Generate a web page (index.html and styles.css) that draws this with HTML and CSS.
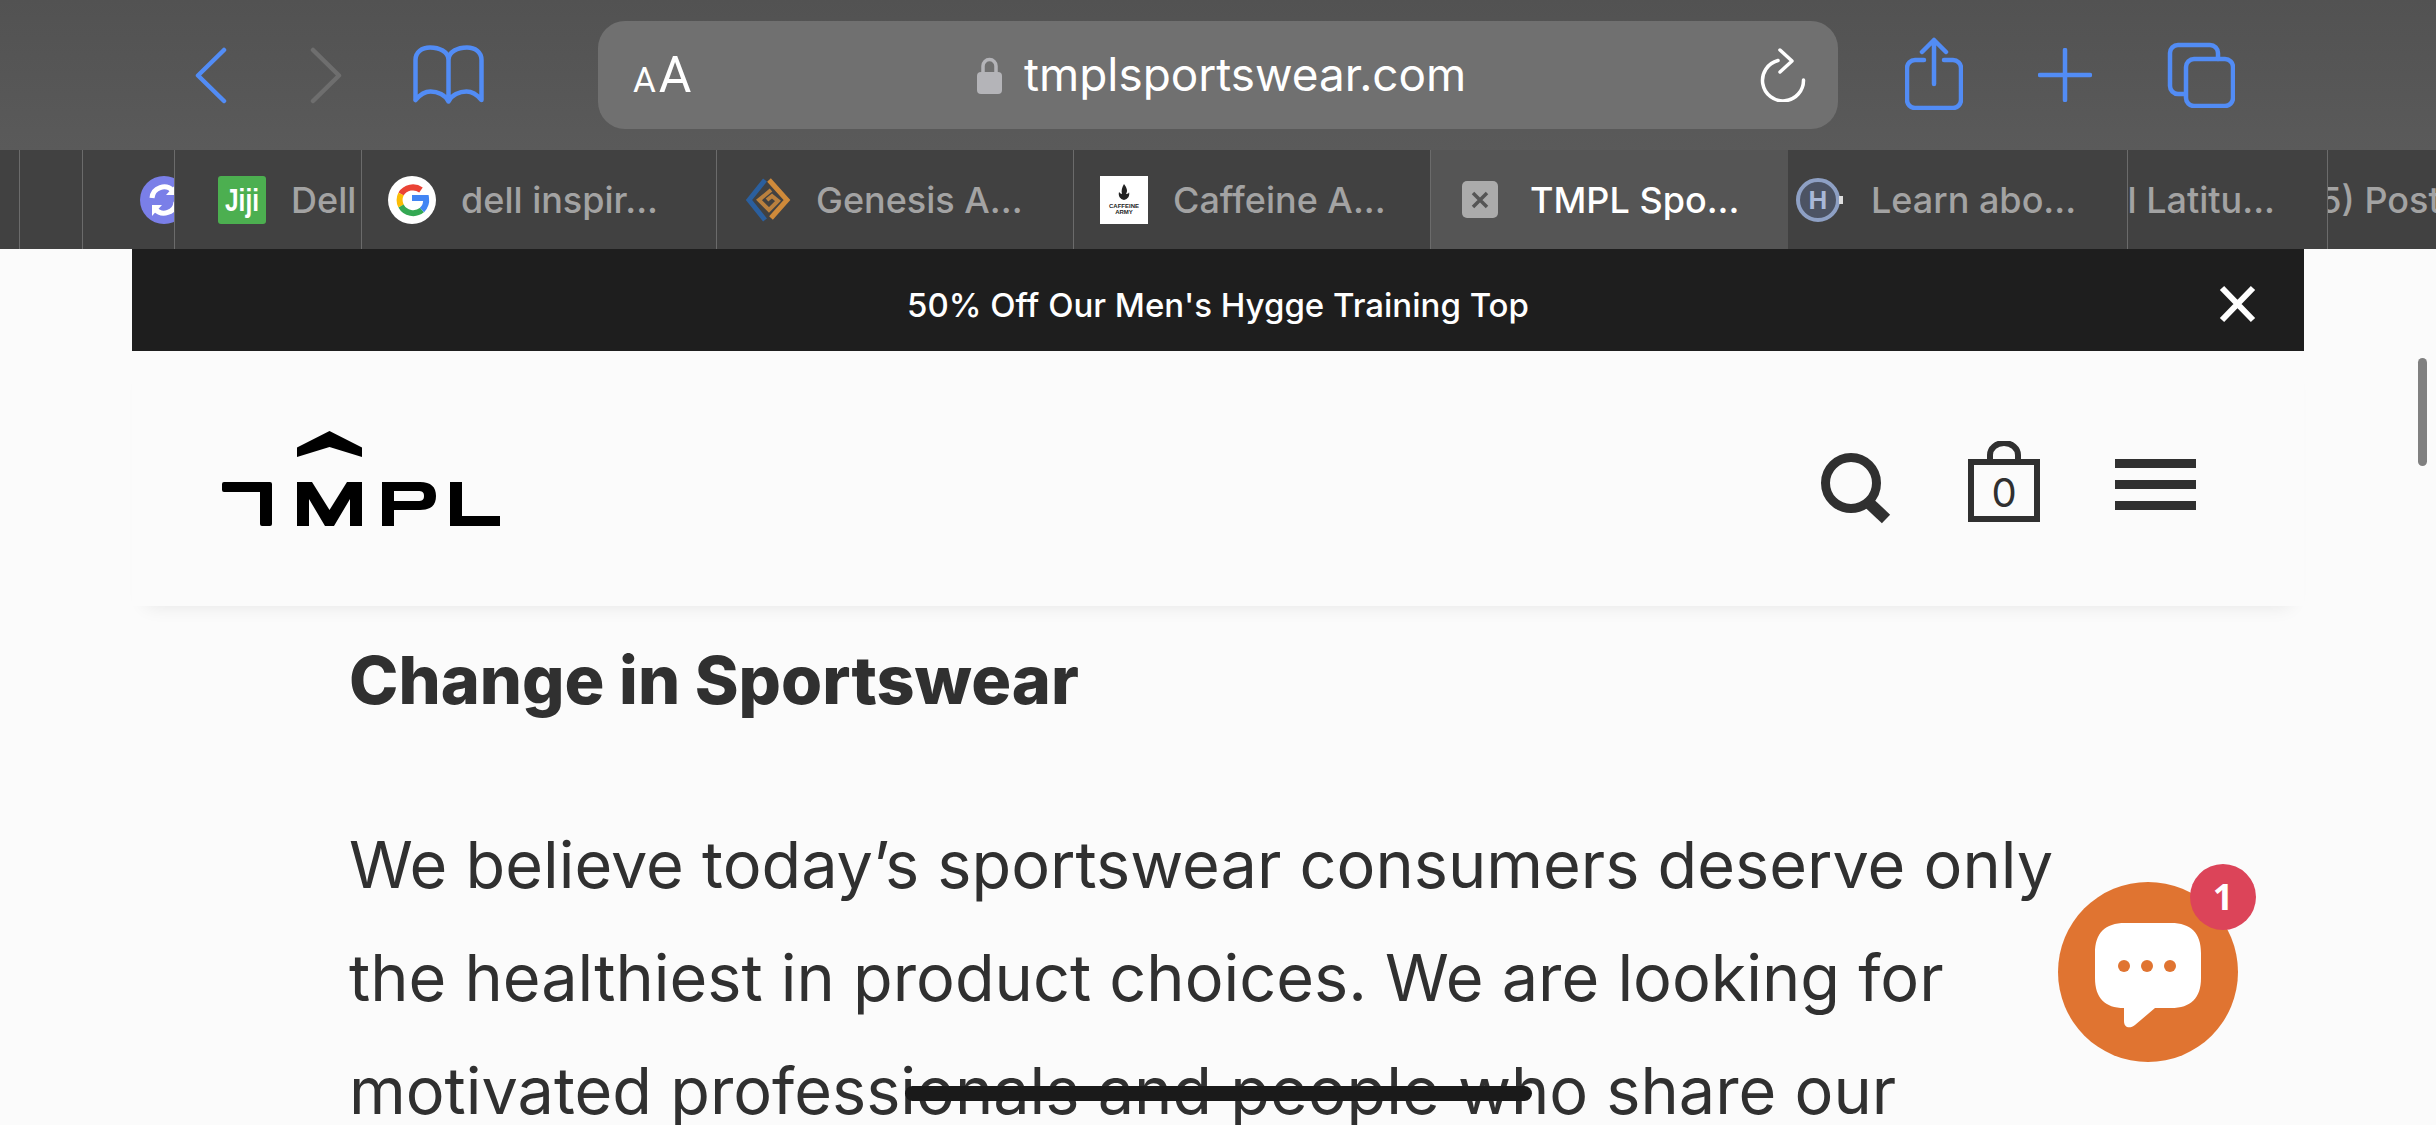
FILE: index.html
```html
<!DOCTYPE html>
<html lang="en">
<head>
<meta charset="utf-8">
<title>TMPL Sportswear</title>
<link rel="stylesheet" href="styles.css">
</head>
<body>
<div class="screen">
  <header class="toolbar">
    <div class="nav-group">
      <svg class="ic-chev" viewBox="0 0 34 57"><path d="M30 3 4 28.500 30 54" class="st-blue"/></svg>
      <svg class="ic-chev ic-fwd" viewBox="0 0 34 57"><path d="M4 3 30 28.500 4 54" class="st-gray"/></svg>
      <svg class="ic-book" viewBox="0 0 71 60"><path class="st-blue" d="M2.500 55V15C2.500 7 9 2.500 17 2.500c9 0 18.500 4 18.500 12.500V56M35.500 15C35.500 6.500 45 2.500 54 2.500c8 0 14.500 4.500 14.500 12.500v40c-5-6-10-8.500-15-8.500-7 0-15 3.500-18 10-3-6.500-11-10-18-10-5 0-10 2.500-15 8.500"/></svg>
    </div>
    <div class="address">
      <span class="aa"><span class="aa-s">A</span><span class="aa-l">A</span></span>
      <span class="url">
        <svg class="ic-lock" viewBox="0 0 25 37"><path d="M6 16V9a6.500 6.500 0 0 1 13 0v7" fill="none" stroke="#b4b4b8" stroke-width="3.500"/><rect x="0" y="15" width="25" height="22" rx="4" fill="#b4b4b8"/></svg>
        <span class="url-text">tmplsportswear.com</span>
      </span>
      <svg class="ic-reload" viewBox="0 0 46 54"><path d="M18 12.500A20.500 20.500 0 1 0 43.500 32" class="st-white"/><path d="M20 2 32 13 20 24" class="st-white"/></svg>
    </div>
    <div class="action-group">
      <svg class="ic-share" viewBox="0 0 58 73"><path class="st-blue" d="M29 47V3M17 15 29 3l12 12M19 23H10a8 8 0 0 0-8 8v32a8 8 0 0 0 8 8h38a8 8 0 0 0 8-8V31a8 8 0 0 0-8-8h-9"/></svg>
      <svg class="ic-plus" viewBox="0 0 54 54"><path class="st-blue" d="M27 2v50M2 27h50"/></svg>
      <svg class="ic-tabs" viewBox="0 0 68 66"><path class="st-blue" d="M17 52h-6a8 8 0 0 1-8-8V11a8 8 0 0 1 8-8h32a8 8 0 0 1 8 8v6"/><rect class="st-blue" x="19" y="17" width="47" height="47" rx="8"/></svg>
    </div>
  </header>

  <nav class="tabs">
    <div class="tab t1"></div>
    <div class="tab t2"></div>
    <div class="tab t3">
      <svg class="fav fav-sync" viewBox="0 0 48 48"><circle cx="24" cy="24" r="24" fill="#7a7fe8"/><path d="M12 22a12 12 0 0 1 21-7M36 26a12 12 0 0 1-21 7" fill="none" stroke="#fff" stroke-width="5"/><path d="M36 8v11H26zM12 40V29h10z" fill="#fff"/></svg>
    </div>
    <div class="tab t4">
      <svg class="fav" viewBox="0 0 48 48"><rect width="48" height="48" rx="3" fill="#4caf50"/><text x="24" y="35" class="jiji" textLength="34" lengthAdjust="spacingAndGlyphs">Jiji</text></svg>
      <span class="tab-title">Dell</span>
    </div>
    <div class="tab t5">
      <svg class="fav" viewBox="0 0 48 48"><circle cx="24" cy="24" r="24" fill="#fff"/><path d="M33 14a14 14 0 0 0-20 4" fill="none" stroke="#ea4335" stroke-width="6"/><path d="M13 18a14 14 0 0 0 0 12" fill="none" stroke="#fbbc05" stroke-width="6"/><path d="M13 30a14 14 0 0 0 21 4" fill="none" stroke="#34a853" stroke-width="6"/><path d="M34 34a14 14 0 0 0 4-12H24" fill="none" stroke="#4285f4" stroke-width="6"/></svg>
      <span class="tab-title">dell inspir...</span>
    </div>
    <div class="tab t6">
      <svg class="fav" viewBox="0 0 48 48"><path d="M20 4 4 24l16 20" fill="none" stroke="#2b5f9e" stroke-width="5"/><path d="M24 4 42 24 26 42" fill="none" stroke="#cf8a3a" stroke-width="5"/><path d="M26 14 14 24l10 10 9-9-6-5-5 4" fill="none" stroke="#b9803e" stroke-width="4"/></svg>
      <span class="tab-title">Genesis A...</span>
    </div>
    <div class="tab t7">
      <svg class="fav" viewBox="0 0 48 48"><rect width="48" height="48" fill="#fff"/><path d="M24 8c3 4 4 7 2 10 2 0 3-1 3-2 1 4-1 7-5 8-4-1-6-4-5-8 1 1 2 2 3 2-1-3 0-7 2-10z" fill="#222"/><text x="24" y="32" class="caff">CAFFEINE</text><text x="24" y="38" class="caff">ARMY</text></svg>
      <span class="tab-title">Caffeine A...</span>
    </div>
    <div class="tab t8 active">
      <span class="close-tab"><svg viewBox="0 0 36 37"><path d="M11 12 25 26M25 12 11 26" fill="none" stroke="#555" stroke-width="3.500"/></svg></span>
      <span class="tab-title">TMPL Spo...</span>
    </div>
    <div class="tab t9">
      <svg class="fav fav-h" viewBox="0 0 48 44"><circle cx="22" cy="22" r="20" fill="#4c5363" stroke="#8ea0c4" stroke-width="4"/><text x="22" y="31" class="hh">H</text><rect x="43" y="18" width="4" height="8" fill="#ddd"/></svg>
      <span class="tab-title">Learn abo...</span>
    </div>
    <div class="tab t10"><span class="tab-title">Dell Latitu...</span></div>
    <div class="tab t11"><span class="tab-title">(5) Posts</span></div>
  </nav>

  <main class="page">
    <div class="promo">
      <span class="promo-text">50% Off Our Men's Hygge Training Top</span>
      <svg class="promo-close" viewBox="0 0 37 38"><path d="M3 3 34 35M34 3 3 35" fill="none" stroke="#fff" stroke-width="6"/></svg>
    </div>
    <div class="site-header">
      <svg class="logo" viewBox="0 0 278 95" role="img" aria-label="TMPL"><path d="M107.500 0 140 16.500V26L107.500 16 75 26V16.500z"/><path d="M0 53a2 2 0 0 1 2-2h46a2 2 0 0 1 2 2v40a2 2 0 0 1-2 2h-8a2 2 0 0 1-2-2V61H2a2 2 0 0 1-2-2z"/><path d="M75 51h15l17.500 28L125 51h15v44h-12V68l-16 27h-9L87 68v27H75z"/><path fill-rule="evenodd" d="M160 51h38c11 0 16 5 16 14s-5 14-16 14h-26v16h-12zM172 60v10h24c4 0 6-1 6-5s-2-5-6-5z"/><path d="M228 51h12v34h38v10h-50z"/></svg>
      <div class="site-icons">
        <svg class="i-search" viewBox="0 0 69 81"><circle cx="30" cy="42" r="25.500" fill="none" stroke="#303030" stroke-width="9"/><path d="M47 61 65 78" stroke="#303030" stroke-width="12" fill="none"/></svg>
        <svg class="i-bag" viewBox="0 0 72 81"><path d="M22 20v-6a14 12 0 0 1 28 0v6" fill="none" stroke="#303030" stroke-width="6"/><rect x="3" y="21" width="66" height="57" fill="none" stroke="#303030" stroke-width="6"/><text x="36" y="66" class="bag-count">0</text></svg>
        <div class="i-menu"><span></span><span></span><span></span></div>
      </div>
    </div>
    <article class="content">
      <h1>Change in Sportswear</h1>
      <p>We believe today’s sportswear consumers deserve only<br>the healthiest in product choices. We are looking for<br>motivated professionals and people who share our</p>
    </article>
  </main>

  <div class="scrollbar"></div>
  <div class="home-bar"></div>
  <div class="chat">
    <svg class="chat-bubble" viewBox="0 0 106 106"><path d="M30 0h46c20 0 30 10 30 30v25c0 20-10 30-30 30H60L40 102c-5 4-11 3-11-4V85C10 85 0 75 0 55V30C0 10 10 0 30 0z" fill="#fff"/><circle cx="29" cy="43" r="6" fill="#e07431"/><circle cx="52" cy="43" r="6" fill="#e07431"/><circle cx="75" cy="43" r="6" fill="#e07431"/></svg>
    <span class="chat-badge">1</span>
  </div>
</div>
</body>
</html>
```

FILE: styles.css
```css
* { box-sizing: border-box; }
html, body { margin: 0; padding: 0; }
body { width: 2436px; height: 1125px; overflow: hidden; background: #fbfbfb; font-family: "Inter", "Liberation Sans", sans-serif; }
.screen { position: relative; width: 2436px; height: 1125px; overflow: hidden; }
svg { display: block; flex: none; }

.st-blue, .st-gray, .st-white { fill: none; stroke-linecap: round; stroke-linejoin: round; }
.st-blue { stroke: #528cf5; stroke-width: 4.500; }
.st-gray { stroke: #6e6e6e; stroke-width: 4.500; }
.st-white { stroke: #fff; stroke-width: 3.500; }

.toolbar { height: 150px; display: flex; align-items: center; background: linear-gradient(#525252, #5a5a5a); }
.nav-group { width: 598px; display: flex; align-items: center; padding-left: 194px; }
.ic-chev { width: 34px; height: 57px; }
.ic-fwd { margin-left: 81px; }
.ic-book { width: 71px; height: 60px; margin-left: 70px; }

.address { width: 1240px; height: 108px; background: #707070; border-radius: 27px; display: flex; align-items: center; padding: 0 32px 0 35px; }
.aa { width: 344px; color: #fff; display: flex; align-items: baseline; font-family: "Roboto", sans-serif; font-weight: 400; }
.aa-s { font-size: 35px; margin-right: 3px; }
.aa-l { font-size: 50px; }
.url { flex: 1; display: flex; align-items: center; gap: 22px; }
.ic-lock { width: 25px; height: 37px; }
.url-text { color: #fff; font-size: 45.900px; font-family: "Inter", sans-serif; font-weight: 400; line-height: 60px; }
.ic-reload { width: 46px; height: 54px; }

.action-group { flex: 1; display: flex; align-items: center; padding-left: 67px; }
.ic-share { width: 58px; height: 73px; margin-top: -4px; }
.ic-plus { width: 54px; height: 54px; margin-left: 75px; }
.ic-tabs { width: 68px; height: 66px; margin-left: 75px; }

.tabs { height: 99px; display: flex; background: #414141; }
.tab { flex: none; height: 99px; display: flex; align-items: center; overflow: hidden; border-right: 1.500px solid #6b6b6b; white-space: nowrap; color: #a3a3a3; font-size: 36px; font-weight: 500; }
.tab-title { flex: none; }
.fav { width: 48px; height: 48px; }
.t1 { width: 20px; }
.t2 { width: 63px; }
.t3 { width: 92px; padding-left: 57px; }
.t4 { width: 187px; padding-left: 43px; gap: 25px; }
.t5 { width: 355px; padding-left: 26px; gap: 25px; }
.t6 { width: 357px; padding-left: 28px; gap: 23px; }
.t7 { width: 357px; padding-left: 26px; gap: 25px; }
.t8 { width: 357px; padding-left: 31px; gap: 32px; border-right: none; }
.t9 { width: 340px; padding-left: 8px; gap: 27px; }
.t10 { width: 200px; justify-content: flex-end; padding-right: 52px; }
.t11 { flex: 1; border-right: none; }
.t11 .tab-title { margin-left: -22px; }
.active { background: #555; color: #fff; }
.close-tab { width: 36px; height: 37px; border-radius: 5px; background: #ababab; }
.fav-h { height: 44px; }
.jiji { font: 700 32px "Liberation Sans", sans-serif; fill: #fff; text-anchor: middle; }
.caff { font: 700 6px "Liberation Sans", sans-serif; fill: #222; text-anchor: middle; }
.hh { font: 700 26px "Liberation Sans", sans-serif; fill: #a9b8d8; text-anchor: middle; }

.page { height: 876px; }
.promo { margin: 0 132px; height: 102px; background: #1e1e1e; display: flex; align-items: center; justify-content: center; position: relative; }
.promo-text { color: #fff; font-size: 33px; font-weight: 500; margin-top: 9px; }
.promo-close { position: absolute; right: 48px; top: 36px; width: 37px; height: 38px; }
.site-header { position: relative; margin: 0 132px; height: 255px; background: #fbfbfb; box-shadow: 0 14px 18px -14px rgba(0,0,0,.09); display: flex; align-items: center; justify-content: space-between; padding: 0 108px 0 90px; }
.logo { width: 278px; height: 95px; }
.site-icons { display: flex; align-items: center; gap: 75px; margin-top: 6px; }
.i-search { width: 69px; height: 81px; margin-right: 3px; overflow: visible; }
.i-bag { width: 72px; height: 81px; }
.bag-count { font: 400 40px "Inter", sans-serif; fill: #303030; text-anchor: middle; }
.i-menu { width: 81px; height: 81px; padding-top: 18px; display: flex; flex-direction: column; gap: 12px; }
.i-menu span { display: block; height: 9px; background: #303030; }

.content { padding: 35px 0 0 349px; color: #303030; }
.content h1 { margin: 0; font-size: 66.500px; line-height: 78px; font-weight: 800; }
.content p { margin: 89px 0 0; font-size: 64.800px; line-height: 113px; font-weight: 400; white-space: nowrap; }

.scrollbar { position: absolute; top: 358px; left: 2418px; width: 9px; height: 108px; border-radius: 5px; background: #808080; }
.home-bar { position: absolute; top: 1086px; left: 905px; width: 627px; height: 15px; border-radius: 8px; background: #1a1a1a; }
.chat { position: absolute; left: 2058px; top: 882px; width: 180px; height: 180px; border-radius: 50%; background: #e07431; display: flex; align-items: center; justify-content: center; }
.chat-bubble { width: 106px; height: 106px; margin-top: 7px; }
.chat-badge { position: absolute; left: 132px; top: -18px; width: 66px; height: 66px; border-radius: 50%; background: #dc4459; color: #fff; font: 700 36px/66px "Open Sans", sans-serif; text-align: center; }
```
